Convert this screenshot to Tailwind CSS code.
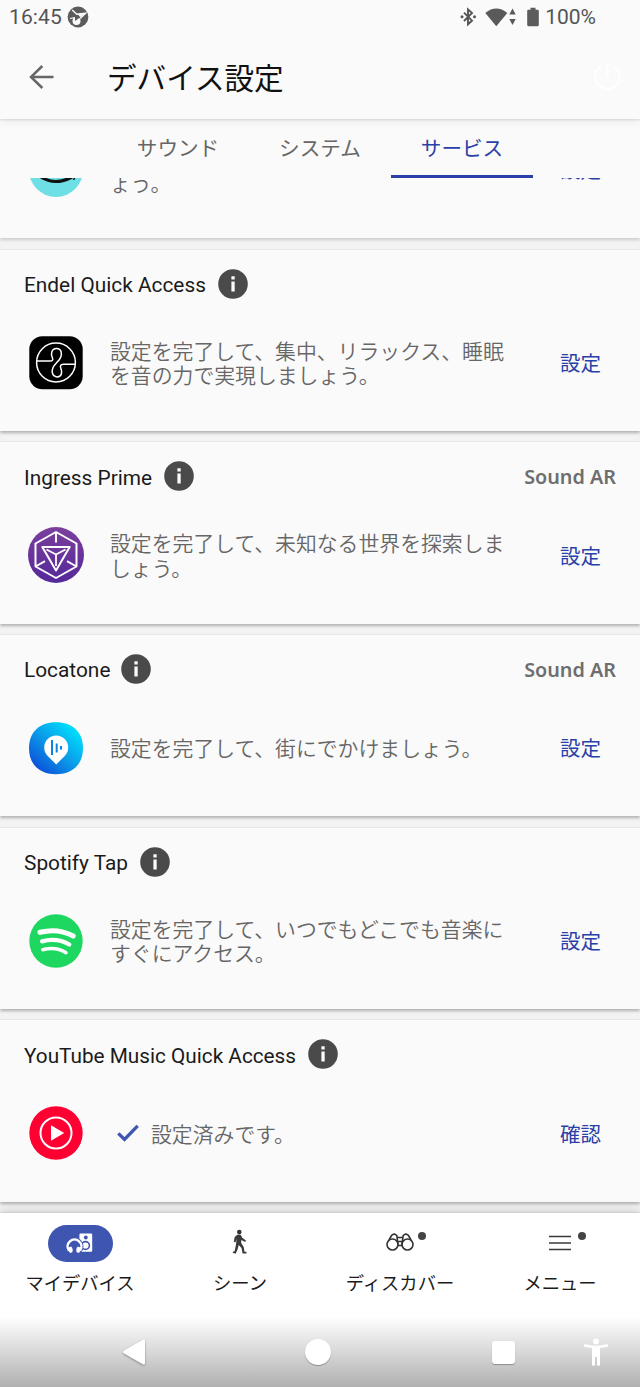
<!DOCTYPE html>
<html lang="ja">
<head>
<meta charset="utf-8">
<title>デバイス設定</title>
<script src="https://cdn.jsdelivr.net/npm/@tailwindcss/browser@4"></script>
</head>
<body class="bg-[#f3f3f3]">
<svg class="hidden">
  <symbol id="info" viewBox="0 0 30 30"><circle cx="15" cy="15" r="14.8" fill="#4a4a4a"/><path d="M13.4 7.3h3.3v3.2h-3.3zM13.4 12.4h3.3v10h-3.3z" fill="#fafafa"/></symbol>
</svg>
<div class="flex h-[1387px] w-[640px] flex-col overflow-hidden font-['Roboto','Noto_Sans_CJK_JP',sans-serif]">
  <header class="z-20 h-[119px] shrink-0 bg-[#fafafa] shadow-[0_1px_2px_rgba(0,0,0,0.12),0_3px_9px_rgba(0,0,0,0.05)]">
    <div class="flex h-[34px] items-center pl-[9px] pr-[44px] text-[#545454]">
      <span class="text-[21px] leading-none tracking-[0.1px]">16:45</span>
      <svg class="ml-[5px]" width="22" height="22" viewBox="0 0 22 22"><circle cx="11" cy="11" r="10.4" fill="#5c5c5c"/><path d="M5.200 4 9.800 8.200 18.600 7.200 13.200 12.400" fill="none" stroke="#fafafa" stroke-width="1.400"/><path d="m10.500 7.800 8-.8-5.300 4.200z" fill="#fafafa"/><circle cx="9.500" cy="15" r="4" fill="#fafafa"/><path d="M3 12.500 8 11.500" stroke="#fafafa" stroke-width="1.200"/><path d="m7.800 8.700 5.200 2.600-4.800 3.600z" fill="#5c5c5c"/></svg>
      <div class="ml-auto flex items-center">
        <svg width="17" height="20" viewBox="0 0 17 20"><path d="m4 5.600 8 8-4 3.700V2.300L12 6l-8 8" fill="none" stroke="#555" stroke-width="1.900"/><circle cx="2" cy="9.800" r="1.500" fill="#555"/><circle cx="14.500" cy="9.800" r="1.500" fill="#555"/></svg>
        <svg class="ml-[8px]" width="32" height="20" viewBox="0 0 32 20"><path d="M.3 6Q11.3-2.800 22.300 6L11.300 19.200z" fill="#5a5a5a"/><path d="m27.500 1.500 3.200 6h-6.400zm0 16.500 3.200-6h-6.400z" fill="#5a5a5a"/></svg>
        <svg class="ml-[10px]" width="12" height="20" viewBox="0 0 12 20"><path d="M3.500.8h5v2h2.200q1.100 0 1.100 1.100v14.200q0 1.100-1.100 1.100H1.300q-1.100 0-1.100-1.100V3.900q0-1.100 1.100-1.100h2.200z" fill="#5c5c5c"/></svg>
        <span class="ml-[6px] text-[21px] leading-none">100%</span>
      </div>
    </div>
    <div class="flex h-[85px] items-center pl-[29px] pr-[18px]">
      <svg width="25" height="24" viewBox="0 0 25 24"><path d="M13.300 1 2 12l11.300 11M2 12h22.500" fill="none" stroke="#666" stroke-width="2.500"/></svg>
      <h1 class="ml-[53px] pt-[6px] text-[29.6px] leading-none text-[#111]">デバイス設定</h1>
      <svg class="ml-auto" width="29" height="29" viewBox="0 0 29 29"><path d="M8 4.200a12.200 12.200 0 1 0 13 0M14.500 1v14" fill="none" stroke="#fefefe" stroke-width="2.500"/></svg>
    </div>
  </header>
  <nav class="z-10 flex h-[59px] shrink-0 justify-center bg-[#fafafa] text-[20.6px] leading-[60px] text-[#666]">
    <div class="w-[142px] text-center">サウンド</div>
    <div class="w-[142px] text-center">システム</div>
    <div class="w-[142px] border-b-[3px] border-[#2c3fa8] text-center text-[#2840a8]">サービス</div>
  </nav>
  <main class="h-[1035px] shrink-0 overflow-hidden bg-[#f3f3f3] text-[20.85px]">
    <div class="-mt-[121px] flex flex-col gap-[11.4px]">
      <section class="flex h-[181.3px] flex-col bg-[#fafafa] shadow-[0_2px_3px_rgba(0,0,0,0.16),0_-1px_1px_rgba(0,0,0,0.03)]">
        <div class="h-[70px]"></div>
        <div class="flex h-[86px] items-center pl-[28px]">
          <svg width="56" height="56" viewBox="0 0 56 56"><circle cx="28" cy="28" r="27" fill="#6fdfe6"/><path d="M13 35q14 9 31 0" fill="none" stroke="#111" stroke-width="3.200"/><path d="m45.500 38 2-4" stroke="#111" stroke-width="1.500"/></svg>
          <p class="ml-[26px] w-[400px] pt-[3px] leading-[24.5px] text-[#666] font-[350]"><br>ょう。</p>
          <a class="ml-[50px] pt-[3px] text-[20.5px] text-[#2840a8]">設定</a>
        </div>
      </section>
      <section class="flex h-[181.3px] flex-col bg-[#fafafa] shadow-[0_2px_3px_rgba(0,0,0,0.28),0_-1px_1px_rgba(0,0,0,0.03)]">
        <div class="flex h-[70px] items-center px-[24px]">
          <h2 class="pt-[2px] text-[#1b1b1b]">Endel Quick Access</h2>
          <svg class="-mt-[2px] ml-[12px]" width="30" height="30"><use href="#info"/></svg>
        </div>
        <div class="flex h-[86px] items-center pl-[28px]">
          <svg width="56" height="56" viewBox="0 0 56 56"><rect x="1.300" y="1.300" width="53.400" height="53" rx="13" fill="#000"/><g fill="none" stroke="#fff" stroke-width="1.500"><circle cx="28" cy="27.500" r="19.400"/><path d="M8.600 26H22c2.600 0 3.300-1.300 2.400-3.200-1.700-3.400-1.200-9.300 4.100-9.300s5.800 5.600 3.800 9.600c-1.500 3-5.800 6.200-7.300 9.400-1.700 3.700-.8 9.400 4.100 9.400s5.300-5 3.800-8.400c-1.100-2.600-.3-4.300 2.500-4.300h12"/></g></svg>
          <p class="ml-[26px] w-[400px] pt-[3px] leading-[24.5px] text-[#666] font-[350]">設定を完了して、集中、リラックス、睡眠<br>を音の力で実現しましょう。</p>
          <a class="ml-[50px] pt-[3px] text-[20.5px] text-[#2840a8]">設定</a>
        </div>
      </section>
      <section class="flex h-[181.3px] flex-col bg-[#fafafa] shadow-[0_2px_3px_rgba(0,0,0,0.28),0_-1px_1px_rgba(0,0,0,0.03)]">
        <div class="flex h-[70px] items-center px-[24px]">
          <h2 class="pt-[2px] text-[#1b1b1b]">Ingress Prime</h2>
          <svg class="-mt-[2px] ml-[12px]" width="30" height="30"><use href="#info"/></svg>
          <span class="-mt-[1px] ml-auto font-['Noto_Sans'] text-[19.8px] font-semibold text-[#6e6e6e]">Sound AR</span>
        </div>
        <div class="flex h-[86px] items-center pl-[28px]">
          <svg width="56" height="56" viewBox="0 0 56 56"><defs><linearGradient id="ing" x2="0" y2="1"><stop stop-color="#7c3f9c"/><stop offset="1" stop-color="#55289a"/></linearGradient></defs><circle cx="28" cy="28" r="28" fill="url(#ing)"/><g fill="none" stroke="#fff" stroke-width="2" stroke-linejoin="round"><path d="M28 5 48.500 16.500v23L28 51 7.500 39.500v-23zM28 5v10.500M7.500 39.500l9.500-5.300M48.500 39.500 39 34.200"/><path d="M14.300 20h27.400L28 43.500z"/><path d="M18.500 22.500 28 27.500l9.500-5M28 27.500V39" stroke-width="1.800"/></g></svg>
          <p class="ml-[26px] w-[400px] pt-[3px] leading-[24.5px] text-[#666] font-[350]">設定を完了して、未知なる世界を探索しま<br>しょう。</p>
          <a class="ml-[50px] pt-[3px] text-[20.5px] text-[#2840a8]">設定</a>
        </div>
      </section>
      <section class="flex h-[181.3px] flex-col bg-[#fafafa] shadow-[0_2px_3px_rgba(0,0,0,0.28),0_-1px_1px_rgba(0,0,0,0.03)]">
        <div class="flex h-[70px] items-center px-[24px]">
          <h2 class="pt-[2px] text-[#1b1b1b]">Locatone</h2>
          <svg class="-mt-[2px] ml-[11px]" width="30" height="30"><use href="#info"/></svg>
          <span class="-mt-[1px] ml-auto font-['Noto_Sans'] text-[19.8px] font-semibold text-[#6e6e6e]">Sound AR</span>
        </div>
        <div class="flex h-[86px] items-center pl-[28px]">
          <svg width="56" height="56" viewBox="0 0 56 56"><defs><linearGradient id="loc" x1=".15" y1=".9" x2=".85" y2=".15"><stop stop-color="#0b52d8"/><stop offset=".5" stop-color="#0b9ae8"/><stop offset="1" stop-color="#00dcfb"/></linearGradient></defs><path d="M28 2.200C44.500 2.200 55 12 55 28.200S44.500 54.200 28 54.200 1 44.500 1 28.200 11.500 2.200 28 2.200" fill="url(#loc)"/><path d="M28.200 44.500 19.700 36A12 12 0 1 1 36.700 36z" fill="#fff"/><path d="M24 20v15M28.700 23.500v9M33 26v3.500" stroke="#0b84e0" stroke-width="2"/></svg>
          <p class="ml-[26px] w-[400px] pt-[3px] leading-[24.5px] text-[#666] font-[350]">設定を完了して、街にでかけましょう。</p>
          <a class="ml-[50px] pt-[3px] text-[20.5px] text-[#2840a8]">設定</a>
        </div>
      </section>
      <section class="flex h-[181.3px] flex-col bg-[#fafafa] shadow-[0_2px_3px_rgba(0,0,0,0.28),0_-1px_1px_rgba(0,0,0,0.03)]">
        <div class="flex h-[70px] items-center px-[24px]">
          <h2 class="pt-[2px] text-[#1b1b1b]">Spotify Tap</h2>
          <svg class="-mt-[2px] ml-[12px]" width="30" height="30"><use href="#info"/></svg>
        </div>
        <div class="flex h-[86px] items-center pl-[28px]">
          <svg width="56" height="56" viewBox="0 0 56 56"><circle cx="28" cy="28" r="26.700" fill="#1ed760"/><g fill="none" stroke="#fff" stroke-linecap="round"><path d="M12 19.300q18-4.500 33.200 3.700" stroke-width="5"/><path d="M14 28.300q15-4 27.300 3.200" stroke-width="4.300"/><path d="M14.800 36.700q13-3.200 23.200 3" stroke-width="3.500"/></g></svg>
          <p class="ml-[26px] w-[400px] pt-[3px] leading-[24.5px] text-[#666] font-[350]">設定を完了して、いつでもどこでも音楽に<br>すぐにアクセス。</p>
          <a class="ml-[50px] pt-[3px] text-[20.5px] text-[#2840a8]">設定</a>
        </div>
      </section>
      <section class="flex h-[181.3px] flex-col bg-[#fafafa] shadow-[0_2px_3px_rgba(0,0,0,0.28),0_-1px_1px_rgba(0,0,0,0.03)]">
        <div class="flex h-[70px] items-center px-[24px]">
          <h2 class="pt-[2px] text-[20.75px] text-[#1b1b1b]">YouTube Music Quick Access</h2>
          <svg class="-mt-[2px] ml-[12px]" width="30" height="30"><use href="#info"/></svg>
        </div>
        <div class="flex h-[86px] items-center pl-[28px]">
          <svg width="56" height="56" viewBox="0 0 56 56"><circle cx="28" cy="28" r="26.700" fill="#ff0033"/><circle cx="28" cy="28" r="15.500" fill="none" stroke="#fff" stroke-width="2"/><path d="M23 20.300 36.200 28 23 35.700z" fill="#fff"/></svg>
          <svg class="ml-[33px]" width="22" height="18" viewBox="0 0 22 18"><path d="m1.300 9.300 6.200 6.200L20.700 1.800" fill="none" stroke="#3f56b0" stroke-width="3.300"/></svg>
          <p class="ml-[12px] w-[359px] pt-[3px] leading-[24.5px] text-[#666] font-[350]">設定済みです。</p>
          <a class="ml-[50px] pt-[3px] text-[20.5px] text-[#2840a8]">確認</a>
        </div>
      </section>
    </div>
  </main>
  <footer class="z-10 flex h-[174px] shrink-0 flex-col bg-white shadow-[0_-1px_2px_rgba(0,0,0,0.10),0_-3px_12px_rgba(0,0,0,0.12)]">
    <div class="grid h-[104px] grid-cols-4 pt-[11.5px] text-[18.3px] text-[#1b1b1b]">
      <div class="flex flex-col items-center">
        <div class="flex h-[37px] w-[65px] items-center justify-center rounded-full bg-[#3f56b0]">
          <svg width="28" height="22" viewBox="0 0 28 22"><path d="M14.700 1.500h10.200q1.300 0 1.300 1.300v15.600q0 1.300-1.300 1.300H13.400V2.800q0-1.300 1.300-1.300" fill="#fff"/><circle cx="19.800" cy="5.500" r="1.900" fill="#3f56b0"/><circle cx="19.500" cy="13.500" r="3.900" fill="none" stroke="#3f56b0" stroke-width="1.600"/><circle cx="8.500" cy="14.300" r="9" fill="#3f56b0"/><path d="M2.900 18.500A6.900 6.900 0 1 1 14.100 18.500" fill="none" stroke="#fff" stroke-width="2.500"/><path d="M1.700 15.700 5.200 14.600Q7.500 17 6.300 20.300L4.200 21Q2 19 1.700 15.700M15.300 15.700 11.800 14.600Q9.500 17 10.700 20.300L12.800 21Q15 19 15.300 15.700" fill="#fff"/></svg>
        </div>
        <span class="mt-[8.500px] leading-[27px]">マイデバイス</span>
      </div>
      <div class="flex flex-col items-center">
        <div class="flex h-[35px] items-center"><svg width="16" height="26" viewBox="0 0 16 26"><circle cx="7.300" cy="3.100" r="2.300" fill="#333"/><path d="M5.200 5.800 8.600 5.700 10.500 9 14 11.500 13.200 12.900 9.300 11 9.200 14 11.800 18.300 12.400 22.500 14.500 23v1.600H10.600L9.500 19 6.700 16 5.500 20.800 3.600 24.800 0.700 23.800 1.100 22.500 2.600 22.300 4 15.500 4.600 9.500 3.500 13.300 1.800 13 2.600 8.300z" fill="#3a3a3a"/></svg></div>
        <span class="mt-[10.500px] leading-[27px]">シーン</span>
      </div>
      <div class="flex flex-col items-center">
        <div class="relative flex h-[35px] items-center"><svg width="28" height="20" viewBox="0 0 28 20"><g fill="none" stroke="#333" stroke-width="1.600"><circle cx="6.500" cy="12.500" r="5.500"/><circle cx="21.500" cy="12.500" r="5.500"/><path d="M3 8 5.500 3.500Q8 .8 10.800 3.500L12 12.500M25 8 22.500 3.500Q20 .8 17.200 3.500L16 12.500M11 5.500h6M12 9.500h4M12 13.500h4"/></g></svg><i class="absolute left-[32px] top-[7px] h-[8px] w-[8px] rounded-full bg-[#444]"></i></div>
        <span class="mt-[10.500px] leading-[27px]">ディスカバー</span>
      </div>
      <div class="flex flex-col items-center">
        <div class="relative flex h-[36px] items-center"><svg width="22" height="16" viewBox="0 0 22 16"><path d="M0 1.500h22M0 8h22M0 14.500h22" stroke="#3a3a3a" stroke-width="1.700"/></svg><i class="absolute left-[29px] top-[7px] h-[8px] w-[8px] rounded-full bg-[#444]"></i></div>
        <span class="mt-[9.500px] leading-[27px]">メニュー</span>
      </div>
    </div>
    <div class="flex h-[70px] items-center bg-linear-to-b from-white via-[#d8d8d8] to-[#b0b0b0] pl-[120.500px]">
      <svg class="drop-shadow-[0_1px_1px_rgba(0,0,0,0.35)]" width="26" height="28" viewBox="0 0 26 28"><path d="M3.500 14 22.500 3v22z" fill="#fff" stroke="#fff" stroke-width="3" stroke-linejoin="round"/></svg>
      <i class="ml-[158px] h-[26px] w-[26px] rounded-full bg-white shadow-[0_1px_1px_rgba(0,0,0,0.3)]"></i>
      <i class="ml-[161px] h-[23px] w-[23px] rounded-[3px] bg-white shadow-[0_1px_1px_rgba(0,0,0,0.3)]"></i>
      <svg class="ml-[69px]" width="24" height="28" viewBox="0 0 24 28"><circle cx="12" cy="3.500" r="3" fill="#fff"/><path d="M.3 6q11.700 3.500 23.400 0l.3 2.700-8 1.400V27.500h-3V19h-2v8.500H8V10.100L0 8.700z" fill="#fff"/></svg>
    </div>
  </footer>
</div>
</body>
</html>
